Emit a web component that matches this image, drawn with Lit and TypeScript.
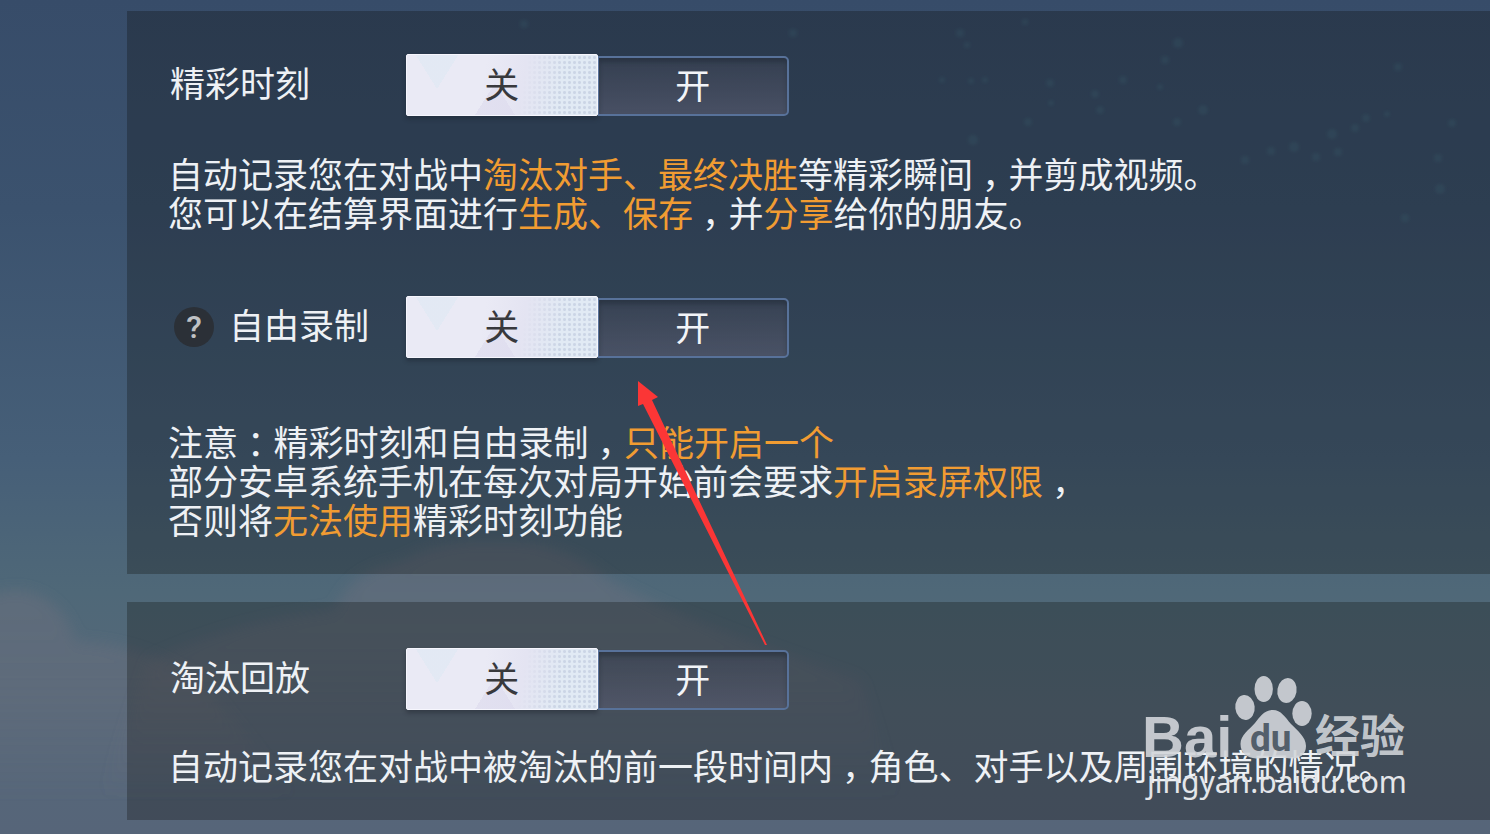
import { LitElement, html, css, svg } from "lit";
import { customElement, property, state } from "lit/decorators.js";

@customElement("option-toggle")
class OptionToggle extends LitElement {
  static styles = css`
    :host {
      display: block;
    }
    .group {
      display: grid;
      grid-template-columns: 1fr 1fr;
      width: 383px;
      height: 62px;
    }
    .option {
      box-sizing: border-box;
      margin: 2px 0 0;
      padding: 0 0 4px;
      border: 2px solid #58729a;
      border-radius: 4px;
      background: linear-gradient(rgba(58, 66, 82, 0.6), rgba(84, 88, 108, 0.7));
      box-shadow: inset 0 4px 4px rgba(20, 26, 38, 0.3);
      color: #f2f4f8;
      font: 400 35px/52px "Noto Sans CJK SC", sans-serif;
      cursor: pointer;
    }
    .option:last-child {
      border-left-width: 1px;
      border-radius: 0 5px 5px 0;
    }
    .option.on {
      margin: 0;
      border: 1px solid #f6f6fd;
      border-radius: 2px;
      color: #38393d;
      line-height: 56px;
      background:
        conic-gradient(from -32deg at 50% 100%, rgba(226, 233, 244, 0.9) 64deg, transparent 64deg) 4px 0 / 52px 34px
          no-repeat,
        conic-gradient(from 148deg at 50% 0, rgba(222, 220, 238, 0.7) 64deg, transparent 64deg) 64px 100% / 48px 32px
          no-repeat,
        linear-gradient(100deg, #eaeaf5 40%, #e4e4f2 60%, rgba(226, 232, 243, 0) 80%),
        radial-gradient(circle, rgba(198, 208, 226, 0.8) 1px, transparent 2px) 0 0 / 5px 5px,
        #e1eaf4;
      box-shadow: 0 3px 4px rgba(24, 30, 40, 0.4);
    }
  `;
  @property() name = "";
  @state() private on = false;

  render() {
    return html`
      <div class="group" role="group" aria-label=${this.name}>
        <button class="option ${this.on ? "" : "on"}" aria-pressed=${!this.on} @click=${() => (this.on = false)}>关</button>
        <button class="option ${this.on ? "on" : ""}" aria-pressed=${this.on} @click=${() => (this.on = true)}>开</button>
      </div>
    `;
  }
}

// Faint stars of the night sky: x, y, radius.
const stars = [
  [524, 24, 4], [793, 33, 4], [1025, 22, 3], [960, 33, 4], [967, 45, 3], [1178, 43, 5], [1165, 60, 4],
  [942, 80, 3], [971, 81, 3], [985, 80, 3], [1050, 83, 4], [1051, 103, 3], [1095, 94, 4], [1100, 110, 4],
  [1123, 80, 4], [1160, 87, 3], [1203, 110, 5], [1177, 122, 4], [1028, 122, 4], [973, 140, 5], [1245, 160, 4],
  [1271, 151, 4], [1294, 147, 5], [1316, 157, 4], [1332, 134, 5], [1338, 152, 4], [1355, 128, 4],
  [1366, 118, 4], [1387, 114, 3], [1452, 123, 4], [1438, 158, 4], [1440, 189, 5], [1405, 218, 4], [1398, 67, 4],
];

@customElement("app-root")
class AppRoot extends LitElement {
  static styles = css`
    :host {
      display: block;
      position: relative;
      overflow: hidden;
      min-height: 100vh;
      background: linear-gradient(#374c69 0%, #3b526e 25%, #465f78 55%, #4f6878 71%, #566879 85%, #566579 100%);
      color: #eef1f5;
      font: 400 35px/39px "Noto Sans CJK SC", sans-serif;
    }
    .sky {
      position: absolute;
      left: 0;
      top: 0;
    }
    .page {
      position: relative;
      display: flex;
      flex-direction: column;
      gap: 28px;
      padding: 11px 0 14px 127px;
    }
    .panel {
      display: flex;
      flex-direction: column;
      gap: 65px;
      padding: 43px 0 36px 41px;
      background: rgba(12, 10, 8, 0.28);
    }
    .panel.last {
      padding-top: 46px;
    }
    .row {
      display: grid;
      grid-template-columns: 238px auto;
      align-items: center;
    }
    .name {
      display: flex;
      align-items: center;
      gap: 15px;
      padding-left: 2px;
    }
    .name.helped {
      padding-left: 6px;
    }
    .label,
    .text {
      margin: 0;
      font: inherit;
    }
    .label {
      padding-bottom: 7px;
    }
    .text {
      padding-top: 37px;
    }
    .text.note {
      padding-top: 63px;
    }
    .last .text {
      padding-top: 35px;
    }
    .key {
      color: #f19c32;
    }
    .mid {
      padding: 0 9px;
      font-feature-settings: "halt";
    }
    .help {
      width: 40px;
      height: 40px;
      padding: 0;
      border: 0;
      border-radius: 50%;
      background: #2b3037;
      color: #bfc1c4;
      font: 500 32px/40px Roboto, sans-serif;
      cursor: pointer;
    }
    .arrow {
      position: absolute;
      left: 638px;
      top: 381px;
      pointer-events: none;
    }
    .mark {
      position: absolute;
      right: 78px;
      bottom: 24px;
      pointer-events: none;
    }
    .logo {
      fill: #d2d5d9;
      fill-opacity: 0.9;
    }
    .bai {
      font: 700 58px "Liberation Sans", sans-serif;
    }
    .du {
      font: 700 37px Roboto, sans-serif;
      fill: #43515d;
    }
    .cn {
      font: 700 45px "Noto Sans CJK SC", sans-serif;
    }
    .site {
      font: 400 30px "Noto Sans", sans-serif;
      fill: #e4e6ea;
    }
  `;

  render() {
    const comma = html`<span class="mid">，</span>`;
    return html`
      <svg class="sky" width="1490" height="834" aria-hidden="true">
        <defs>
          <filter id="soft" x="-20%" y="-20%" width="140%" height="140%"><feGaussianBlur stdDeviation="7" /></filter>
          <filter id="dot" x="-50%" y="-50%" width="200%" height="200%"><feGaussianBlur stdDeviation="1.5" /></filter>
          <linearGradient id="fade" x1="0" y1="0" x2="0" y2="1">
            <stop offset="0" stop-color="#70707e" stop-opacity="0.45" />
            <stop offset="0.4" stop-color="#70707e" stop-opacity="0.36" />
            <stop offset="1" stop-color="#70707e" stop-opacity="0" />
          </linearGradient>
        </defs>
        <path
          filter="url(#soft)"
          fill="url(#fade)"
          d="M-20 600 Q20 580 50 602 Q68 615 76 642 Q130 640 200 680 L300 800 L-20 800Z"
        />
        <path
          filter="url(#soft)"
          fill="url(#fade)"
          d="M150 660 Q240 620 335 610 Q350 570 400 562 Q440 538 500 542 Q560 538 610 580 Q680 620 860 680 L900 800 L100 800Z"
        />
        ${stars.map(([x, y, r]) => svg`<circle cx=${x} cy=${y} r=${r} fill="#4a7c92" fill-opacity="0.24" filter="url(#dot)" />`)}
      </svg>
      <main class="page">
        <section class="panel">
          <div>
            <div class="row">
              <div class="name"><h2 class="label">精彩时刻</h2></div>
              <option-toggle name="精彩时刻"></option-toggle>
            </div>
            <p class="text">
              自动记录您在对战中<span class="key">淘汰对手、最终决胜</span>等精彩瞬间${comma}并剪成视频。<br />您可以在结算界面进行<span
                class="key"
                >生成、保存</span
              >${comma}并<span class="key">分享</span>给你的朋友。
            </p>
          </div>
          <div>
            <div class="row">
              <div class="name helped">
                <button class="help">?</button>
                <h2 class="label">自由录制</h2>
              </div>
              <option-toggle name="自由录制"></option-toggle>
            </div>
            <p class="text note">
              注意<span class="mid">：</span>精彩时刻和自由录制${comma}<span class="key">只能开启一个</span
              ><br />部分安卓系统手机在每次对局开始前会要求<span class="key">开启录屏权限</span>${comma}<br />否则将<span
                class="key"
                >无法使用</span
              >精彩时刻功能
            </p>
          </div>
        </section>
        <section class="panel last">
          <div>
            <div class="row">
              <div class="name"><h2 class="label">淘汰回放</h2></div>
              <option-toggle name="淘汰回放"></option-toggle>
            </div>
            <p class="text">自动记录您在对战中被淘汰的前一段时间内${comma}角色、对手以及周围环境的情况。</p>
          </div>
        </section>
      </main>
      <svg class="arrow" width="132" height="268" aria-hidden="true">
        <path fill="#fb3636" d="M0 0 L20 16 L14 19 L129 264 L127 264 L5 23 L0 25Z" />
      </svg>
      <svg class="mark" width="272" height="140" viewBox="1140 670 272 140">
        <g class="logo">
          <text class="bai" x="1142" y="757">Bai</text>
          <ellipse cx="1245" cy="707.500" rx="9.700" ry="12.500" transform="rotate(-6 1245 707.500)" />
          <ellipse cx="1263.700" cy="689" rx="9.200" ry="13" />
          <ellipse cx="1287" cy="690.500" rx="9.600" ry="12.500" transform="rotate(10 1287 690.500)" />
          <ellipse cx="1302" cy="713.500" rx="9.700" ry="12.500" />
          <path
            d="M1273 710 C1281 710 1285 717 1291 724 C1297 730 1306 737 1306 746 C1306 755 1299 759 1291 758.500 C1284 758 1279 757 1273 757 C1267 757 1263 759 1256 758.500 C1247 758 1240.500 753 1240.500 744 C1240.500 735 1249 730 1255 723 C1260 717 1264 710 1273 710Z"
          />
          <text class="du" x="1250" y="751">du</text>
          <text class="cn" x="1315" y="753">经验</text>
        </g>
        <text class="site" x="1147" y="793">jingyan.baidu.com</text>
      </svg>
    `;
  }
}
